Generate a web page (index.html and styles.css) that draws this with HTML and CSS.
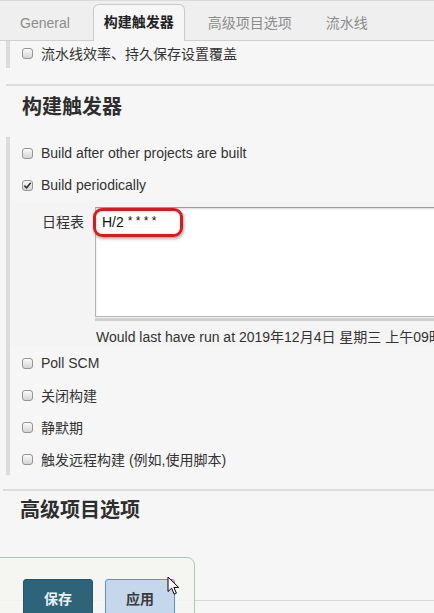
FILE: index.html
```html
<!DOCTYPE html>
<html lang="zh-CN">
<head>
    <meta charset="UTF-8">
    <title>构建触发器</title>
    <link rel="stylesheet" href="styles.css">
</head>
<body>
<div class="tabs">
    <span class="tab">General</span>
    <span class="tab active">构建触发器</span>
    <span class="tab">高级项目选项</span>
    <span class="tab">流水线</span>
</div>

<div class="block block-top">
    <div class="row short"><span class="cb"></span>流水线效率、持久保存设置覆盖</div>
</div>

<div class="sep"></div>
<h2>构建触发器</h2>

<div class="block">
    <div class="row"><span class="cb"></span>Build after other projects are built</div>
    <div class="row"><span class="cb on"><svg viewBox="0 0 10 10" width="9" height="9"><path d="M1.5 5.2 L4 7.6 L8.6 2" fill="none" stroke="#333" stroke-width="1.8"/></svg></span>Build periodically</div>
    <div class="sched">
        <label class="sched-label">日程表</label>
        <div class="sched-field">
            <div class="textarea">H/2 <span class="stars">* * * *</span></div>
            <div class="resize-bar"></div>
            <div class="hint">Would last have run at 2019年12月4日 星期三 上午09时02分41秒 CST; would next run at 2019年12月4日 星期三 上午11时02分41秒 CST.</div>
        </div>
        <div class="mark"></div>
    </div>
    <div class="row"><span class="cb"></span>Poll SCM</div>
    <div class="row"><span class="cb"></span>关闭构建</div>
    <div class="row"><span class="cb"></span>静默期</div>
    <div class="row"><span class="cb"></span>触发远程构建 (例如,使用脚本)</div>
</div>

<div class="sep sep-wide"></div>
<h2 class="h2-adv">高级项目选项</h2>

<div class="bottom-line"></div>

<div class="bottom-bar">
    <button class="btn btn-save">保存</button>
    <button class="btn btn-apply">应用</button>
</div>

<svg class="cursor" viewBox="0 0 13 20" width="13" height="20">
    <path d="M1 1 L1 15.5 L4.6 12.2 L7.2 18.2 L9.4 17.2 L6.9 11.4 L11.6 11.4 Z" fill="#fff" stroke="#000" stroke-width="1" stroke-linejoin="round"/>
</svg>
</body>
</html>
```

FILE: styles.css
```css
body { margin: 0; font-family: 'Liberation Sans', 'Noto Sans CJK SC', sans-serif; font-size: 14px; color: #333; background: #f6f6f6; overflow: hidden; height: 613px; position: relative; }

.tabs { display: flex; align-items: flex-end; gap: 12px; padding-left: 9px; background: #efefef; border-top: 1px solid #dadada; border-bottom: 1px solid #cfcfcf; box-sizing: border-box; height: 41px; }
.tab { height: 35px; line-height: 35px; padding: 0 10px; border: 1px solid transparent; border-bottom: none; color: #8c8c8c; margin-bottom: -1px; }
.tab.active { background: #f6f6f6; border-color: #c9c9c9; border-radius: 6px 6px 0 0; color: #222; font-weight: bold; height: 36px; }

.block { margin-left: 6px; border-left: 4px solid #dcdcdc; }
.block-top { padding-bottom: 3px; }
.row { display: flex; align-items: center; height: 32px; padding-left: 12px; }
.row.short { height: 24px; }

.cb { width: 11px; height: 11px; box-sizing: border-box; border: 1px solid #959595; border-radius: 3px; background: linear-gradient(#fafafa, #d4d4d4); margin-right: 8px; display: flex; align-items: center; justify-content: center; }

.sep { height: 2px; background: #dcdcdc; margin: 16px 0 0 6px; }
.sep-wide { margin: 14px 0 0 3px; }
h2 { margin: 8px 0 17px 0; padding-left: 22px; font-size: 20px; line-height: 26px; color: #2e2e2e; }
.h2-adv { margin-top: 6px; padding-left: 20px; }

.sched { position: relative; display: flex; padding: 6px 0 1px 0; background: #f4f4f4; }
.sched-label { width: 74px; flex: none; text-align: right; padding-right: 11px; padding-top: 6px; line-height: 18px; }
.sched-field { flex: none; width: 420px; }
.textarea { height: 110px; box-sizing: border-box; background: #fff; border: 1px solid #b4b4b4; border-top-color: #9c9c9c; box-shadow: inset 0 1px 2px rgba(0,0,0,0.15); padding: 5px 6px; line-height: 18px; color: #111; }
.stars { font-size: 12px; position: relative; top: -2px; }
.resize-bar { height: 3px; background: #cfcfcf; margin-top: 1px; }
.hint { white-space: nowrap; margin-top: 7px; line-height: 18px; padding-left: 1px; }
.mark { position: absolute; left: 83px; top: 7px; width: 90px; height: 29px; box-sizing: border-box; border: 3px solid #e2151b; border-radius: 9px; box-shadow: 1px 2px 3px rgba(0,0,0,0.3); }

.bottom-line { position: absolute; left: 0; right: 0; top: 600px; height: 1px; background: #d8d8d8; }
.bottom-bar { position: absolute; left: -10px; top: 557px; width: 205px; height: 80px; box-sizing: border-box; border: 1px solid #aac9bb; border-radius: 0 8px 0 0; background: rgba(245,245,240,0.85); padding: 21px 0 0 32px; display: flex; gap: 12px; align-items: flex-start; }
.btn { width: 70px; height: 40px; border-radius: 3px; font-family: inherit; font-size: 14px; font-weight: bold; padding: 0 0 2px 0; }
.btn-save { background: #2e6479; border: 1px solid #24566a; color: #e9f1f4; }
.btn-apply { background: #c4d7eb; border: 1px solid #5b8fd6; color: #3a3a3a; }

.cursor { position: absolute; left: 167px; top: 576px; }
```
